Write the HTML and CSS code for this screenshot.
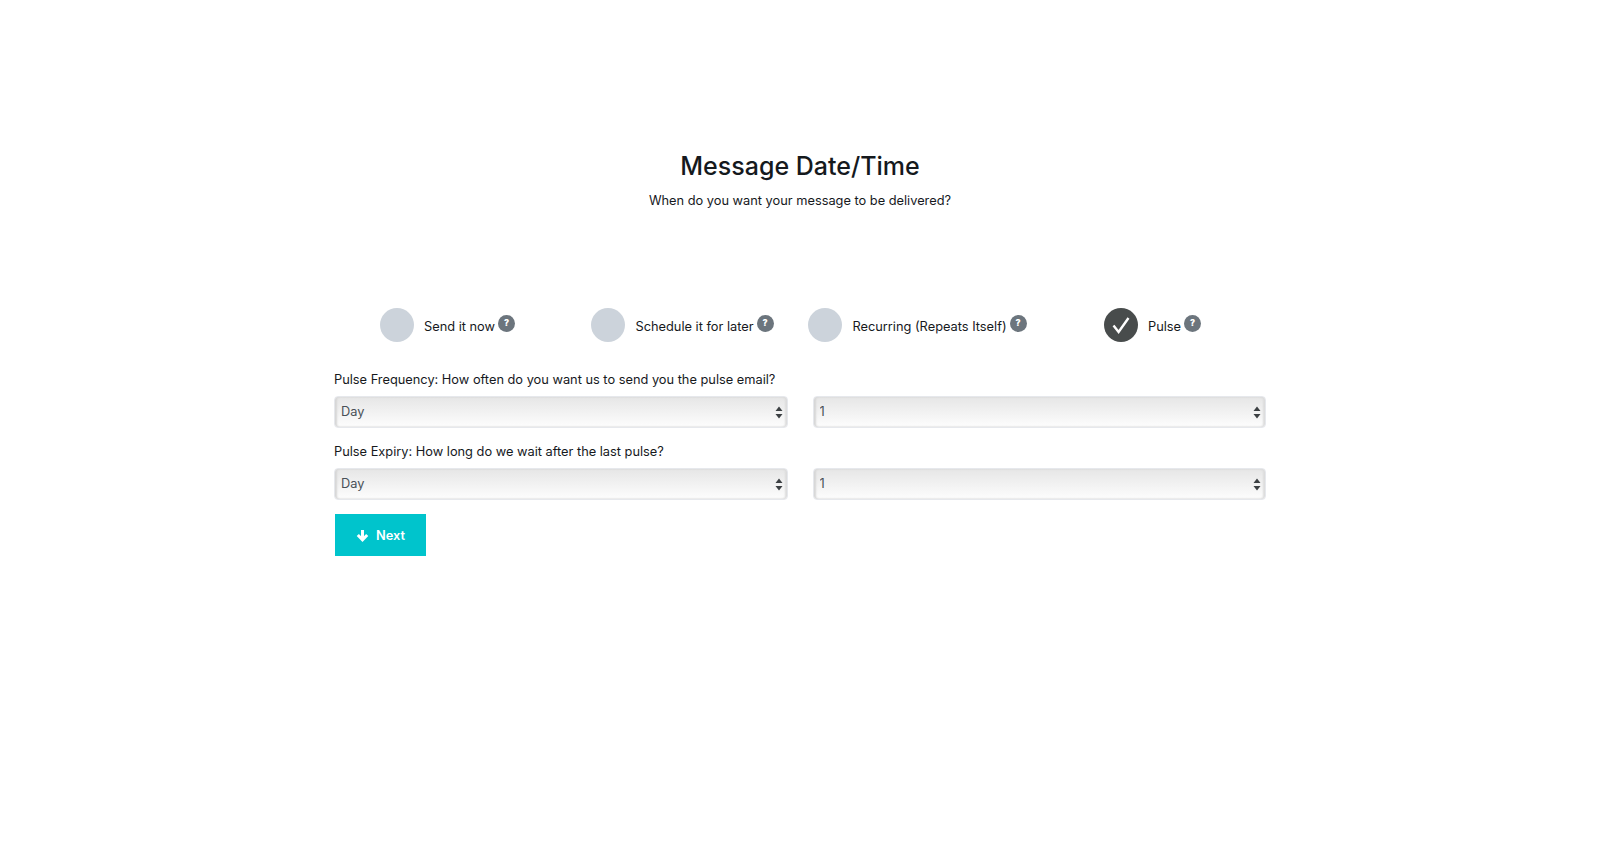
FILE: index.html
```html
<!DOCTYPE html>
<html lang="en">
<head>
    <meta charset="UTF-8">
    <meta name="viewport" content="width=device-width, initial-scale=1.0">
    <title>Message Date/Time</title>
    <link rel="stylesheet" href="styles.css">
</head>
<body>
    <div class="page-header">
        <h1>Message Date/Time</h1>
        <p>When do you want your message to be delivered?</p>
    </div>

    <form class="schedule-form">
        <div class="options">
            <label class="option">
                <span class="option-circle"></span>
                <span class="option-label">Send it now</span>
                <span class="help-icon">?</span>
            </label>
            <label class="option">
                <span class="option-circle"></span>
                <span class="option-label">Schedule it for later</span>
                <span class="help-icon">?</span>
            </label>
            <label class="option">
                <span class="option-circle"></span>
                <span class="option-label">Recurring (Repeats Itself)</span>
                <span class="help-icon">?</span>
            </label>
            <label class="option">
                <span class="option-circle checked">
                    <svg width="20" height="20" viewBox="0 0 20 20"><path d="M2.5 10.5 L7.6 17 L17.5 3" fill="none" stroke="#fff" stroke-width="2.4"/></svg>
                </span>
                <span class="option-label">Pulse</span>
                <span class="help-icon">?</span>
            </label>
        </div>

        <div class="field-label">Pulse Frequency: How often do you want us to send you the pulse email?</div>
        <div class="select-row">
            <div class="select-wrap">
                <select><option>Day</option></select>
                <svg class="select-arrows" width="8" height="13" viewBox="0 0 8 13"><path d="M4 0.5 L7.5 5 L0.5 5 Z M0.5 8 L7.5 8 L4 12.5 Z" fill="#3c4043"/></svg>
            </div>
            <div class="select-wrap">
                <select><option>1</option></select>
                <svg class="select-arrows" width="8" height="13" viewBox="0 0 8 13"><path d="M4 0.5 L7.5 5 L0.5 5 Z M0.5 8 L7.5 8 L4 12.5 Z" fill="#3c4043"/></svg>
            </div>
        </div>

        <div class="field-label">Pulse Expiry: How long do we wait after the last pulse?</div>
        <div class="select-row">
            <div class="select-wrap">
                <select><option>Day</option></select>
                <svg class="select-arrows" width="8" height="13" viewBox="0 0 8 13"><path d="M4 0.5 L7.5 5 L0.5 5 Z M0.5 8 L7.5 8 L4 12.5 Z" fill="#3c4043"/></svg>
            </div>
            <div class="select-wrap">
                <select><option>1</option></select>
                <svg class="select-arrows" width="8" height="13" viewBox="0 0 8 13"><path d="M4 0.5 L7.5 5 L0.5 5 Z M0.5 8 L7.5 8 L4 12.5 Z" fill="#3c4043"/></svg>
            </div>
        </div>

        <button type="button" class="next-button">
            <svg width="13" height="13" viewBox="0 0 13 13"><path d="M6.5 1 V10 M1.8 6 L6.5 10.8 L11.2 6" fill="none" stroke="#fff" stroke-width="3"/></svg>
            Next
        </button>
    </form>
</body>
</html>
```

FILE: styles.css
```css
* {
    margin: 0;
    padding: 0;
    box-sizing: border-box;
}

body {
    font-family: Inter, 'Liberation Sans', sans-serif;
    background: #fff;
    color: #16191d;
    min-height: 100vh;
}

.page-header {
    padding-top: 149px;
    text-align: center;
}

h1 {
    font-size: 25px;
    font-weight: 500;
    line-height: 34px;
    color: #15191d;
    margin-bottom: 8px;
}

.page-header p {
    font-size: 12.8px;
    line-height: 20px;
}

.schedule-form {
    width: 932px;
    margin: 97px auto 0;
}

.options {
    display: grid;
    grid-template-columns: repeat(4, 1fr);
    margin: 0 -4px 28px;
}

.option {
    display: flex;
    align-items: center;
    justify-content: center;
}

.option-circle {
    width: 34px;
    height: 34px;
    border-radius: 50%;
    background: #ccd3db;
    margin-right: 10px;
    display: flex;
    align-items: center;
    justify-content: center;
}

.option-circle.checked {
    background: #484c4c;
}

.option-label {
    font-size: 12.8px;
    line-height: 20px;
    margin-top: 4px;
}

.help-icon {
    width: 17px;
    height: 17px;
    border-radius: 50%;
    background: #6c757d;
    color: #fff;
    font-size: 8.5px;
    font-weight: 900;
    line-height: 17px;
    text-align: center;
    margin-left: 3px;
    margin-top: -3px;
}

.field-label {
    font-size: 12.8px;
    line-height: 20px;
    margin-bottom: 6px;
}

.select-row {
    display: grid;
    grid-template-columns: 1fr 1fr;
    column-gap: 25px;
    margin-bottom: 14px;
}

.select-wrap {
    position: relative;
}

.select-wrap select {
    appearance: none;
    display: block;
    width: 100%;
    height: 32px;
    padding: 0 6px 2px;
    font-family: Inter, 'Liberation Sans', sans-serif;
    font-size: 12.8px;
    color: #495057;
    border: 1px solid #e6e8ec;
    border-radius: 4px;
    background: linear-gradient(#e6e6e6, #fdfdfd);
    box-shadow: inset 2px 0 2px #d6d6d6, inset -2px 0 2px #dcdcdc;
}

.select-arrows {
    position: absolute;
    right: 5px;
    top: 10px;
    pointer-events: none;
}

.next-button {
    display: flex;
    align-items: center;
    justify-content: center;
    gap: 7px;
    width: 91px;
    height: 42px;
    margin-left: 1px;
    background: #00c4cc;
    color: #fff;
    border: none;
    font-family: Inter, 'Liberation Sans', sans-serif;
    font-size: 12.8px;
    font-weight: 600;
}
```
